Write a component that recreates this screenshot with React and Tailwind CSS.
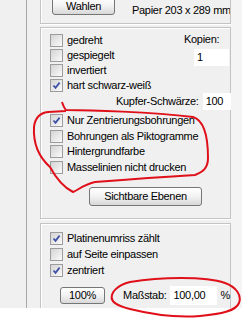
import React from "react";

const font = { fontFamily: '"Liberation Sans", Arial, sans-serif' };

function Box({ checked }) {
  return (
    <div className="relative w-[13px] h-[13px] shrink-0 border border-[#9c9c9c] bg-linear-to-br from-[#d4d4d4] to-[#fafafa]">
      {checked && (
        <svg className="absolute left-[1px] top-[1px]" width="9" height="9" viewBox="0 0 9 9">
          <path d="M1.5 4.5 L3.5 6.8 L7.6 1.6" fill="none" stroke="#3e52a8" strokeWidth="1.8" />
        </svg>
      )}
    </div>
  );
}

function Row({ label, checked, h = "h-[15px]" }) {
  return (
    <div className={`flex items-center gap-[4px] whitespace-nowrap ${h}`}>
      <Box checked={checked} />
      <span className="leading-none">{label}</span>
    </div>
  );
}

function Btn({ children, cls }) {
  return (
    <div className={`flex items-center justify-center whitespace-nowrap rounded-[3px] border border-[#767676] bg-linear-to-b from-white via-[#f2f2f2] to-[#d8d8d8] ${cls}`}>
      {children}
    </div>
  );
}

export default function App() {
  return (
    <div className="relative w-[242px] h-[319px] bg-white overflow-hidden text-[11px] tracking-[-0.3px] text-black" style={font}>
      <div className="flex h-[308px] bg-[#f0f0f0]">
        <div className="w-[26px]" />
        <div className="w-px bg-[#a8a8a8]" />
        <div className="w-[13px]" />
        <div className="w-[191px] flex flex-col">
          {/* group 1 */}
          <div className="relative h-[24px] border-l border-b border-r border-[#c4c4c4] shadow-[inset_1px_0_0_#fff,0_1px_0_#fff]">
            <div className="flex items-end">
              <Btn cls="ml-[11px] mt-[-3px] w-[63px] h-[18px] pt-[1px]">Wahlen</Btn>
              <span className="ml-[17px] mb-[-3px] whitespace-nowrap overflow-hidden w-[98px]">Papier 203 x 289 mm</span>
            </div>
          </div>
          {/* group 2 */}
          <div className="mt-[3px] h-[192px] border border-[#c4c4c4] shadow-[inset_1px_1px_0_#fff,1px_1px_0_#fff] pl-[9px] pt-[5px] flex flex-col">
            <div className="flex">
              <div className="flex flex-col w-[135px]">
                <Row label="gedreht" />
                <Row label="gespiegelt" />
                <Row label="invertiert" />
                <Row label="hart schwarz-weiß" checked />
              </div>
              <div className="flex flex-col items-start">
                <span className="mt-[1px] ml-[-1px] leading-none whitespace-nowrap">Kopien:</span>
                <div className="mt-[4px] ml-[9px] w-[35px] h-[17px] bg-white flex items-center pl-[3px]">1</div>
              </div>
            </div>
            <div className="flex items-center h-[18px] mt-[-1px] whitespace-nowrap">
              <span className="ml-[66px] leading-none">Kupfer-Schwärze:</span>
              <div className="ml-[4px] w-[40px] h-[17px] bg-white flex items-center pl-[3px] shrink-0">100</div>
            </div>
            <div className="flex flex-col mt-[2px]">
              <Row label="Nur Zentrierungsbohrungen" checked h="h-[16px]" />
              <Row label="Bohrungen als Piktogramme" h="h-[16px]" />
              <Row label="Hintergrundfarbe" h="h-[15px]" />
              <Row label="Masselinien nicht drucken" h="h-[16px]" />
            </div>
            <Btn cls="mt-[12px] ml-[39px] w-[113px] h-[19px]">Sichtbare Ebenen</Btn>
          </div>
          {/* group 3 */}
          <div className="mt-[4px] flex-1 border-t border-l border-r border-[#c4c4c4] shadow-[inset_1px_1px_0_#fff] pl-[9px] pt-[6px] flex flex-col">
            <Row label="Platinenumriss zählt" checked h="h-[16px]" />
            <Row label="auf Seite einpassen" h="h-[16px]" />
            <Row label="zentriert" checked h="h-[16px]" />
            <div className="flex items-center mt-[8px] whitespace-nowrap">
              <Btn cls="ml-[10px] w-[47px] h-[17px]">100%</Btn>
              <span className="ml-[18px] leading-none">Maßstab:</span>
              <div className="ml-[4px] w-[48px] h-[19px] bg-white flex items-center pl-[3px]">100,00</div>
              <span className="ml-[4px] leading-none">%</span>
            </div>
          </div>
        </div>
        <div className="flex-1 bg-[#f4f4f4]" />
      </div>
      <svg className="absolute inset-0 pointer-events-none" width="242" height="319" viewBox="0 0 242 319">
        <path d="M62,102 C63,105 64,108 66,110 C90,110 150,112 193,117 C203,120 208,135 208,158 C208,168 203,172 195,175 C160,177 120,180 95,182 C85,184 78,190 73,192 C65,188 57,180 50,167 C40,158 33,145 34,127 C35,118 40,113 48,112 L66,111" fill="none" stroke="#e0101a" strokeWidth="2" strokeLinejoin="round" />
        <path d="M112,300 C110,292 118,285 130,282 C160,277 205,276 225,283 C236,287 242,295 239,303 C236,310 225,314 200,316 C175,318 150,314 130,309 C118,306 112,303 112,298" fill="none" stroke="#e0101a" strokeWidth="2" strokeLinejoin="round" />
      </svg>
    </div>
  );
}
